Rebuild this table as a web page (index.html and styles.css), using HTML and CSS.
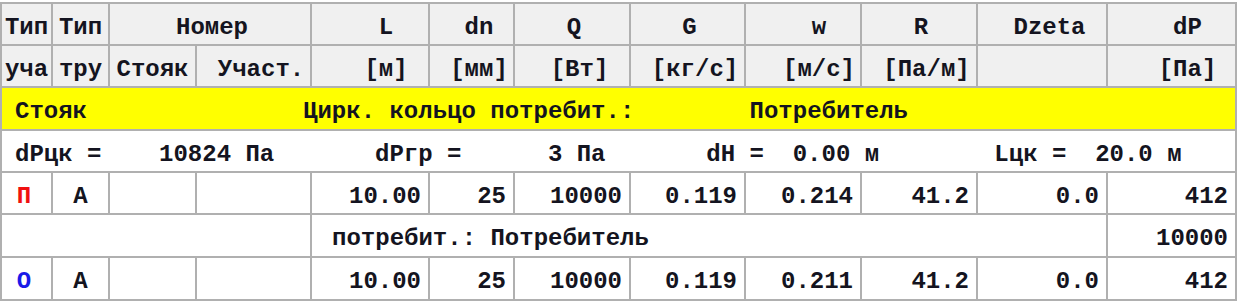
FILE: index.html
```html
<!DOCTYPE html>
<html lang="ru">
<head>
<meta charset="utf-8">
<title>Расчёт участков</title>
<link rel="stylesheet" href="styles.css">
</head>
<body>
<table class="grid">
  <colgroup>
    <col class="w-type1"><col class="w-type2"><col class="w-riser"><col class="w-sect">
    <col class="w-l"><col class="w-dn"><col class="w-q"><col class="w-g">
    <col class="w-w"><col class="w-r"><col class="w-dz"><col class="w-dp">
  </colgroup>
  <thead>
    <tr class="row-a">
      <th>Тип</th><th>Тип</th><th colspan="2" class="sh-s">Номер</th>
      <th class="sh-l">L</th><th class="sh-m">dn</th><th class="sh-s">Q</th><th class="sh-s">G</th>
      <th class="sh-l">w</th><th class="sh-s">R</th><th class="sh-m">Dzeta</th><th class="sh-l">dP</th>
    </tr>
    <tr class="row-a">
      <th>уча</th><th>тру</th><th>Стояк</th><th class="sh-m">Участ.</th>
      <th class="sh-l">[м]</th><th class="sh-m">[мм]</th><th class="sh-m">[Вт]</th><th class="sh-m">[кг/с]</th>
      <th class="sh-l">[м/с]</th><th class="sh-m">[Па/м]</th><th></th><th class="sh-l">[Па]</th>
    </tr>
  </thead>
  <tbody>
    <tr class="row-b ring">
      <td colspan="12" class="line"><div class="ring-fields"><span>Стояк</span><span>Цирк. кольцо потребит.:</span><span>Потребитель</span></div></td>
    </tr>
    <tr class="row-a info">
      <td colspan="12" class="line"><div class="info-fields"><span>dPцк =</span><span>10824 Па</span><span>dPгр =</span><span>3 Па</span><span>dH =</span><span>0.00 м</span><span>Lцк =</span><span>20.0 м</span></div></td>
    </tr>
    <tr class="row-a">
      <td class="kind supply">П</td><td class="mid">А</td><td></td><td></td>
      <td class="num">10.00</td><td class="num">25</td><td class="num">10000</td><td class="num">0.119</td>
      <td class="num">0.214</td><td class="num">41.2</td><td class="num">0.0</td><td class="num">412</td>
    </tr>
    <tr class="row-b">
      <td colspan="4"></td>
      <td colspan="7" class="consumer">потребит.: Потребитель</td>
      <td class="num">10000</td>
    </tr>
    <tr class="row-b">
      <td class="kind return">О</td><td class="mid">А</td><td></td><td></td>
      <td class="num">10.00</td><td class="num">25</td><td class="num">10000</td><td class="num">0.119</td>
      <td class="num">0.211</td><td class="num">41.2</td><td class="num">0.0</td><td class="num">412</td>
    </tr>
  </tbody>
</table>
</body>
</html>
```
FILE: styles.css
```css
html, body {
  margin: 0;
  background: #ffffff;
}

body {
  font-family: "Liberation Mono", "Courier New", monospace;
  font-size: 24px;
  color: #141420;
}

.grid {
  border-collapse: collapse;
  table-layout: fixed;
  width: 1235px;
  margin-top: 2px;
}

.w-type1 { width: 51px; }
.w-type2 { width: 57px; }
.w-riser { width: 87px; }
.w-sect  { width: 115px; }
.w-l     { width: 118px; }
.w-dn    { width: 85px; }
.w-q     { width: 116px; }
.w-g     { width: 115px; }
.w-w     { width: 116px; }
.w-r     { width: 116px; }
.w-dz    { width: 130px; }
.w-dp    { width: 129px; }

.grid th,
.grid td {
  border: 2px solid #b0b0b0;
  padding: 6px 0 0 0;
  white-space: nowrap;
  overflow: hidden;
  vertical-align: middle;
  font-weight: bold;
  line-height: 27px;
}

.grid .row-a { height: 42px; }
.grid .row-b { height: 43px; }

.grid th {
  background: #f0f0f0;
  text-align: center;
}

.grid .sh-s { padding-left: 4px; }
.grid .sh-m { padding-left: 15px; }
.grid .sh-l { padding-left: 32px; }

.grid .ring td {
  background: #ffff00;
}

.grid .line {
  text-align: left;
  padding-left: 13px;
}

.ring-fields,
.info-fields {
  display: grid;
}

.ring-fields {
  grid-template-columns: 20ch 31ch auto;
}

.info-fields {
  grid-template-columns: 10ch 15ch 12ch 11ch 6ch 14ch 7ch auto;
}

.grid .info td {
  background: #ffffff;
}

.grid .kind {
  text-align: center;
  padding-right: 5px;
}

.grid .supply { color: #f01010; }
.grid .return { color: #1a1ae8; }

.grid .mid { text-align: center; }

.grid .num {
  text-align: right;
  padding-right: 7px;
}

.grid .consumer {
  text-align: left;
  padding-left: 20px;
}
```
